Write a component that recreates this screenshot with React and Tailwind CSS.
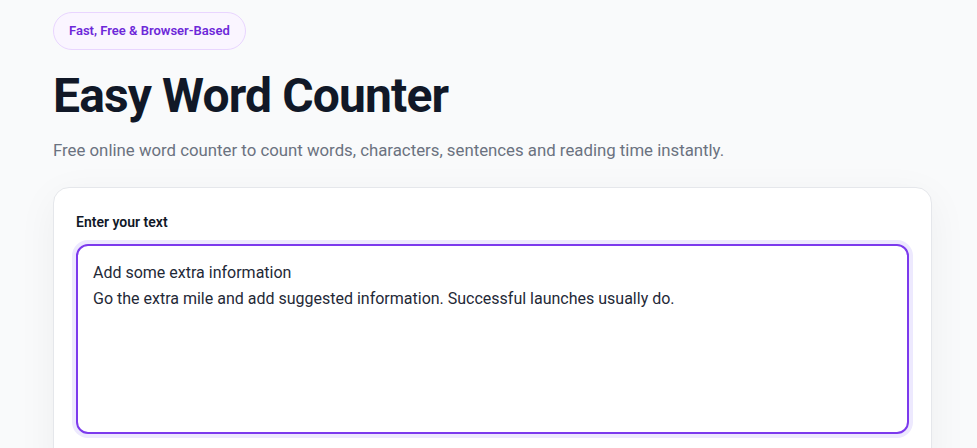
import React from "react";

export default function App() {
  return (
    <div
      className="min-h-screen w-full bg-[#f9fafb] pl-[53px] pt-3"
      style={{ fontFamily: "Roboto, 'Noto Sans', sans-serif" }}
    >
      <div className="w-[879px]">
        <span className="inline-block rounded-full border border-[#e9d5ff] bg-[#faf5ff] px-[15px] py-[10px] text-[13px] leading-4 font-semibold text-[#6d28d9]">
          Fast, Free &amp; Browser-Based
        </span>
        <h1 className="mt-[22px] text-5xl leading-none font-bold tracking-[-0.018em] text-[#111827]">
          Easy Word Counter
        </h1>
        <p className="mt-4 text-[16.8px] leading-7 text-[#6b7280]">
          Free online word counter to count words, characters, sentences and reading time instantly.
        </p>
        <div className="mt-[23px] rounded-2xl border border-[#e5e7eb] bg-white p-[22px] pb-10 shadow-[0_10px_40px_rgba(17,24,39,0.05)]">
          <label className="block pt-[2px] text-sm leading-5 font-semibold text-[#111827]">
            Enter your text
          </label>
          <textarea
            className="mt-3 block h-[190px] w-full resize-none rounded-xl border-2 border-[#7c3aed] px-[15px] pt-[14px] pb-3 text-base leading-[26px] text-[#1f2937] outline-none ring-4 ring-[#ede9fe]"
            defaultValue={
              "Add some extra information\nGo the extra mile and add suggested information. Successful launches usually do."
            }
          />
        </div>
      </div>
    </div>
  );
}
